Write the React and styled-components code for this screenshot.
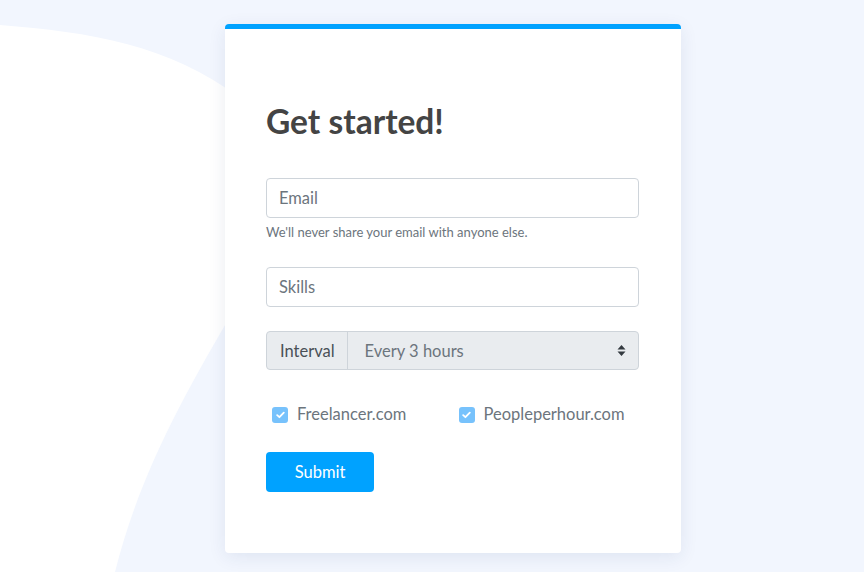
import React from "react";
import styled, { createGlobalStyle } from "styled-components";

const Global = createGlobalStyle`
  html, body { margin: 0; padding: 0; }
  body { background: #f2f6fe; font-family: Lato, "Noto Sans", sans-serif; }
  * { box-sizing: border-box; }
`;

const Page = styled.div`
  position: relative;
  width: 864px;
  height: 572px;
  overflow: hidden;
  background: #f2f6fe;
  padding: 24px 0 0 225px;
`;

const Blob = styled.svg`
  position: absolute;
  left: 0;
  top: 0;
  width: 864px;
  height: 572px;
  z-index: 0;
`;

const Card = styled.div`
  position: relative;
  z-index: 1;
  width: 456px;
  height: 529px;
  background: #fff;
  border-top: 5px solid #00a2ff;
  border-radius: 4px;
  box-shadow: 0 4px 18px rgba(30, 50, 110, 0.09);
  padding: 71px 42px 0 41px;
  display: flex;
  flex-direction: column;
`;

const Title = styled.h1`
  margin: 0 0 35px;
  font-size: 33.5px;
  line-height: 43px;
  font-weight: 700;
  color: #444;
`;

const Input = styled.input`
  display: block;
  width: 100%;
  height: 40px;
  border: 1px solid #ced4da;
  border-radius: 4px;
  padding: 0 12px;
  font-family: Lato, sans-serif;
  font-size: 16.5px;
  color: #495057;
  background: #fff;
  outline: none;
  margin-top: ${(p) => p.$mt || 0}px;
  &::placeholder { color: #6c757d; }
`;

const Help = styled.small`
  display: block;
  margin-top: 4px;
  font-size: 13px;
  line-height: 21px;
  color: #6c757d;
`;

const Group = styled.div`
  display: flex;
  height: 39px;
  margin-top: 24px;
  border: 1px solid #ced4da;
  border-radius: 4px;
  background: #e9ecef;
  overflow: hidden;
`;

const GroupLabel = styled.div`
  display: flex;
  align-items: center;
  padding: 0 12px 0 13px;
  font-size: 16.5px;
  color: #495057;
  border-right: 1px solid #ced4da;
`;

const SelectBox = styled.div`
  flex: 1;
  display: flex;
  align-items: center;
  justify-content: space-between;
  padding: 0 12px 0 17px;
  font-size: 16.5px;
  color: #6c757d;
`;

const Checks = styled.div`
  display: grid;
  grid-template-columns: 1fr 1fr;
  margin-top: 31px;
`;

const CheckItem = styled.label`
  display: flex;
  align-items: center;
  gap: 9px;
  padding-left: 6px;
  font-size: 16.5px;
  line-height: 27px;
  color: #6c757d;
`;

const Box = styled.span`
  width: 16px;
  height: 16px;
  border-radius: 3px;
  background: #77c2fc;
  display: flex;
  align-items: center;
  justify-content: center;
`;

const Button = styled.button`
  align-self: flex-start;
  margin-top: 24px;
  height: 40px;
  width: 108px;
  padding: 0;
  border: none;
  border-radius: 4px;
  background: #00a2ff;
  color: #fff;
  font-family: Lato, sans-serif;
  font-size: 16.5px;
`;

const Check = () => (
  <Box>
    <svg width="9" height="8" viewBox="0 0 9 8">
      <path d="M1.2 4.2 L3.4 6.2 L7.8 1.6" fill="none" stroke="#fff" strokeWidth="1.8" strokeLinecap="round" strokeLinejoin="round" />
    </svg>
  </Box>
);

export default function App() {
  return (
    <>
      <Global />
      <Page>
        <Blob viewBox="0 0 864 572">
          <path d="M0 25 C 90 32 170 45 240 98 L 240 300 C 180 400 138 480 115 572 L 0 572 Z" fill="#ffffff" />
        </Blob>
        <Card>
          <Title>Get started!</Title>
          <Input placeholder="Email" />
          <Help>We'll never share your email with anyone else.</Help>
          <Input placeholder="Skills" $mt={24} />
          <Group>
            <GroupLabel>Interval</GroupLabel>
            <SelectBox>
              <span>Every 3 hours</span>
              <svg width="9" height="13" viewBox="0 0 9 13">
                <path d="M4.5 1 L8.5 5.5 L0.5 5.5 Z M4.5 12 L8.5 7.5 L0.5 7.5 Z" fill="#343a40" />
              </svg>
            </SelectBox>
          </Group>
          <Checks>
            <CheckItem><Check />Freelancer.com</CheckItem>
            <CheckItem><Check />Peopleperhour.com</CheckItem>
          </Checks>
          <Button>Submit</Button>
        </Card>
      </Page>
    </>
  );
}
